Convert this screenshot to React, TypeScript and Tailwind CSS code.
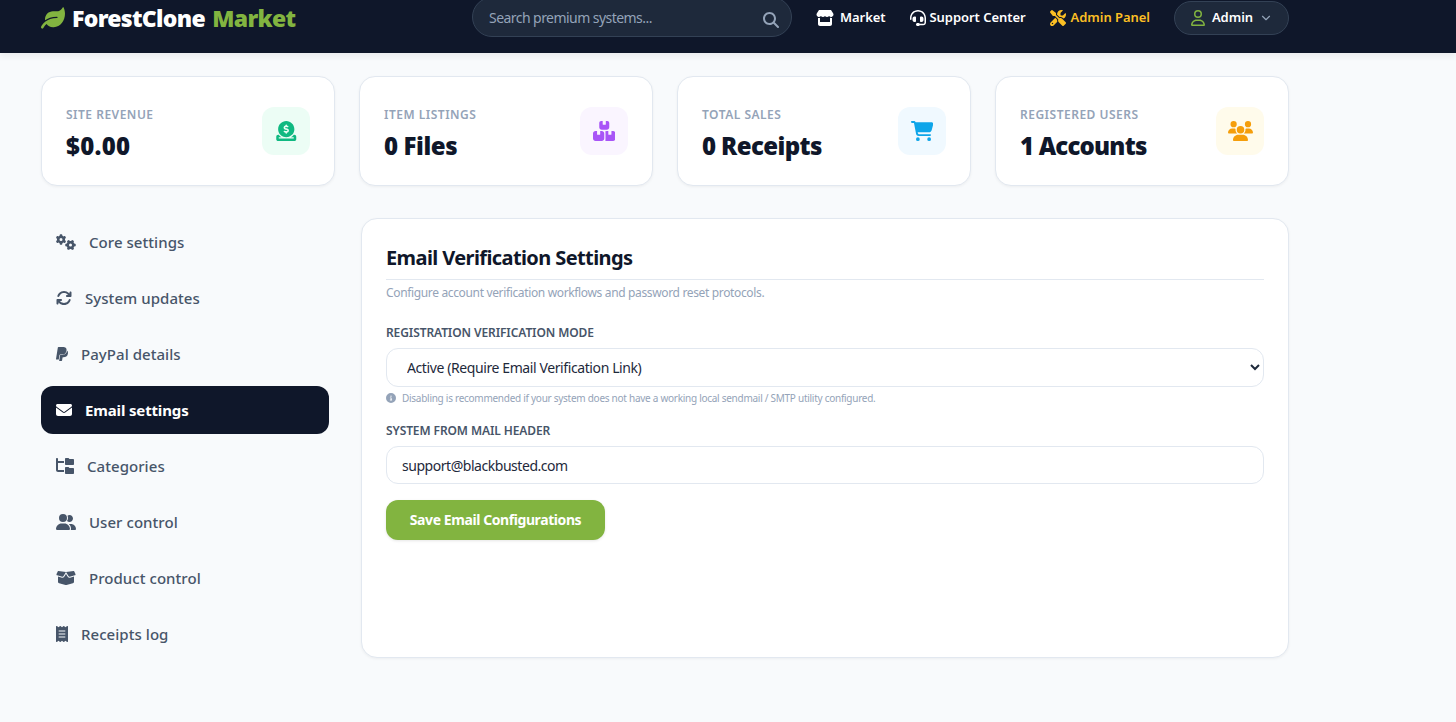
import { FaLeaf } from "react-icons/fa";
import { FaMagnifyingGlass, FaStore, FaHeadset, FaScrewdriverWrench, FaRegUser, FaGears, FaArrowsRotate, FaPaypal, FaEnvelope, FaUserGroup, FaBoxOpen, FaReceipt, FaCartShopping, FaUsers, FaCircleInfo, FaCircleDollarToSlot, FaBoxesStacked, FaFolderTree } from "react-icons/fa6";
import { ChevronDown } from "lucide-react";
import type { ReactNode } from "react";

const stats: { label: string; value: string; track: string; icon: ReactNode; box: string }[] = [
  { label: "Site Revenue", value: "$0.00", track: "tracking-[0.3px]", icon: <FaCircleDollarToSlot className="w-[22.5px] h-[20px] text-[#10b981]" />, box: "bg-[#ecfdf5]" },
  { label: "Item Listings", value: "0 Files", track: "tracking-[-0.4px]", icon: <FaBoxesStacked className="w-[22.5px] h-[20px] text-[#a855f7]" />, box: "bg-[#faf5ff]" },
  { label: "Total Sales", value: "0 Receipts", track: "tracking-[-0.6px]", icon: <FaCartShopping className="w-[22.5px] h-[20px] text-[#0ea5e9]" />, box: "bg-[#f0f9ff]" },
  { label: "Registered Users", value: "1 Accounts", track: "tracking-[-0.8px]", icon: <FaUsers className="w-[25px] h-[20px] text-[#f59e0b]" />, box: "bg-[#fffbeb]" },
];

const menu: { label: string; icon: ReactNode; active?: boolean }[] = [
  { label: "Core settings", icon: <FaGears className="w-[20px] h-[16px]" /> },
  { label: "System updates", icon: <FaArrowsRotate className="w-[16px] h-[16px]" /> },
  { label: "PayPal details", icon: <FaPaypal className="w-[12px] h-[16px]" /> },
  { label: "Email settings", icon: <FaEnvelope className="w-[16px] h-[16px]" />, active: true },
  { label: "Categories", icon: <FaFolderTree className="w-[18px] h-[16px]" /> },
  { label: "User control", icon: <FaUserGroup className="w-[20px] h-[16px]" /> },
  { label: "Product control", icon: <FaBoxOpen className="w-[20px] h-[16px]" /> },
  { label: "Receipts log", icon: <FaReceipt className="w-[12px] h-[16px]" /> },
];

export default function App() {
  return (
    <div className="bg-[#f8fafc] font-['Noto_Sans',sans-serif] overflow-hidden h-[722px]">
      <header className="h-[53px] bg-[#0f172a] shadow-[0_4px_6px_rgba(0,0,0,0.05)] pl-[41px] pr-[167px] pb-[17px] flex items-center">
        <div className="w-[255px] shrink-0 flex items-center gap-[7px] text-[23px] font-black tracking-[-0.7px] leading-none whitespace-nowrap">
          <FaLeaf className="w-[24px] h-[24px] text-[#82b440]" />
          <span className="text-white">ForestClone <span className="text-[#82b440] ml-[2px]">Market</span></span>
        </div>
        <div className="w-[320px] h-[40px] mb-[2px] ml-[176px] rounded-full border border-[#334155] bg-[#1e293b] flex items-center justify-between pl-[16px] pr-[12px] shrink-0 text-[14px] text-[#94a3b8]">
          <span className="tracking-[-0.55px] mt-[1px]">Search premium systems...</span>
          <FaMagnifyingGlass className="w-[16px] h-[16px] mt-[6px]" />
        </div>
        <nav className="ml-auto flex items-center gap-[24px] text-[13px] font-semibold text-white tracking-[-0.05px]">
          <span className="flex items-center gap-[6px]"><FaStore className="w-[18px] h-[16px]" />Market</span>
          <span className="flex items-center gap-[4px]"><FaHeadset className="w-[16px] h-[16px]" />Support Center</span>
          <span className="flex items-center gap-[5px] text-[#fbbf24]"><FaScrewdriverWrench className="w-[16px] h-[16px]" />Admin Panel</span>
          <span className="flex items-center gap-[7px] h-[34px] rounded-full border border-[#334155] bg-[#1e293b] pl-[16px] pr-[15px]">
            <FaRegUser className="w-[14px] h-[16px] text-[#82b440]" />Admin<ChevronDown className="-ml-px w-[14px] h-[14px] text-[#94a3b8]" />
          </span>
        </nav>
      </header>

      <main className="pl-[41px] w-[1289px]">
        <section className="grid grid-cols-4 gap-[24px] mt-[23px]">
          {stats.map((s) => (
            <div key={s.label} className="h-[110px] bg-white rounded-[16px] border border-[#e2e8f0] shadow-[0_1px_3px_rgba(0,0,0,0.05)] px-[24px] flex items-center justify-between">
              <div className="mt-[7px]">
                <div className="text-[12px] font-semibold uppercase text-[#94a3b8] leading-[16px] tracking-[0.5px]">{s.label}</div>
                <div className={`text-[24px] font-black text-[#0f172a] leading-[32px] mt-[7px] ${s.track}`}>{s.value}</div>
              </div>
              <div className={`w-[48px] h-[48px] rounded-[12px] flex items-center justify-center ${s.box}`}>{s.icon}</div>
            </div>
          ))}
        </section>

        <section className="flex mt-[32px] gap-[32px] items-start">
          <aside className="w-[288px] shrink-0 flex flex-col gap-[8px]">
            {menu.map((m) => (
              <div key={m.label} className={`h-[48px] rounded-[12px] pl-[15px] pr-[16px] flex items-center gap-[13px] text-[15px] ${m.active ? "bg-[#0f172a] text-white font-bold tracking-[-0.15px]" : "text-[#475569] font-medium tracking-[0.05px]"}`}>
                {m.icon}
                <span>{m.label}</span>
              </div>
            ))}
          </aside>

          <div className="flex-1 h-[440px] bg-white rounded-[16px] border border-[#e2e8f0] shadow-[0_1px_3px_rgba(0,0,0,0.05)] p-[24px]">
            <h2 className="text-[20px] font-bold text-[#0f172a] leading-[28px] pt-[1px] pb-[7px] border-b border-[#e2e8f0] tracking-[-0.6px]">Email Verification Settings</h2>
            <p className="text-[12px] text-[#94a3b8] leading-[16px] mt-[5px] tracking-[-0.35px]">Configure account verification workflows and password reset protocols.</p>
            <label className="block text-[12px] font-semibold uppercase text-[#475569] leading-[16px] mt-[24px] tracking-[-0.1px]">Registration Verification Mode</label>
            <select defaultValue="a" className="block w-full h-[39px] mt-[7px] rounded-[12px] border border-[#e2e8f0] bg-white px-[16px] text-[14px] text-[#1e293b] tracking-[-0.4px]">
              <option value="a">Active (Require Email Verification Link)</option>
            </select>
            <div className="flex items-center gap-[6px] text-[10px] text-[#94a3b8] leading-[14px] mt-[4px] tracking-[-0.27px]">
              <FaCircleInfo className="w-[10px] h-[10px]" />
              <span>Disabling is recommended if your system does not have a working local sendmail / SMTP utility configured.</span>
            </div>
            <label className="block text-[12px] font-semibold uppercase text-[#475569] leading-[16px] mt-[18px] tracking-[-0.1px]">System From Mail Header</label>
            <input readOnly value="support@blackbusted.com" className="block w-full h-[38px] mt-[7px] rounded-[12px] border border-[#e2e8f0] bg-white px-[15px] text-[14px] text-[#1e293b] tracking-[-0.46px]" />
            <button className="block w-[219px] h-[40px] mt-[16px] pb-[2px] rounded-[12px] bg-[#82b440] text-white text-[14px] font-bold shadow-[0_1px_3px_rgba(0,0,0,0.1)] tracking-[-0.42px]">Save Email Configurations</button>
          </div>
        </section>
      </main>
    </div>
  );
}
